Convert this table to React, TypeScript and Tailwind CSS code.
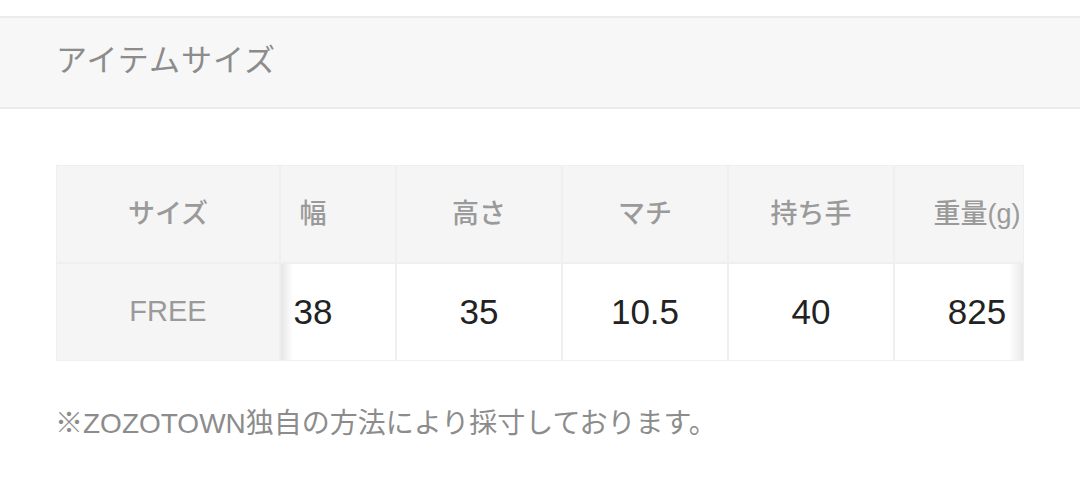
const FONT = { fontFamily: '"Liberation Sans", "Noto Sans CJK JP", sans-serif' };

const COLS = [
  { label: "幅", value: "38" },
  { label: "高さ", value: "35" },
  { label: "マチ", value: "10.5" },
  { label: "持ち手", value: "40" },
  { label: "重量(g)", value: "825" },
];

export default function App() {
  return (
    <div className="h-[484px] w-[1080px] overflow-hidden bg-white" style={FONT}>
      <div className="h-[16px]" />
      <div className="flex h-[93px] items-center border-y-2 border-[#ebebeb] bg-[#f7f7f7] pl-[56px] pb-[2px] text-[31px] tracking-[1px] text-[#8c8c8c]">
        アイテムサイズ
      </div>

      <div className="ml-[56px] mt-[56px] flex w-[968px] overflow-hidden border border-[#efefef] bg-[#efefef]">
        <div className="flex w-[222px] shrink-0 flex-col gap-[2px]">
          <div className="flex h-[96px] items-center justify-center bg-[#f5f5f5] text-[27px] font-medium text-[#9a9a9a]">
            サイズ
          </div>
          <div className="flex h-[96px] items-center justify-center bg-[#f5f5f5] text-[29px] font-medium text-[#9a9a9a]">
            FREE
          </div>
        </div>

        <div className="relative ml-[2px] flex-1 overflow-hidden">
          <div className="-ml-[50px] flex gap-[2px]">
            {COLS.map((c) => (
              <div key={c.label} className="flex w-[164px] shrink-0 flex-col gap-[2px]">
                <div className="flex h-[96px] items-center justify-center bg-[#f5f5f5] text-[27px] font-medium text-[#9a9a9a]">
                  {c.label}
                </div>
                <div className="flex h-[96px] items-center justify-center bg-white text-[35px] text-[#222]">
                  {c.value}
                </div>
              </div>
            ))}
          </div>
          <div className="pointer-events-none absolute bottom-0 left-0 h-[96px] w-[12px] bg-gradient-to-r from-[#e6e6e6] to-transparent" />
          <div className="pointer-events-none absolute bottom-0 right-0 h-[96px] w-[14px] bg-gradient-to-l from-[#eaeaea] to-transparent" />
        </div>
      </div>

      <div className="mt-[42px] pl-[55px] text-[28px] text-[#8c8c8c]">
        ※ZOZOTOWN独自の方法により採寸しております。
      </div>
    </div>
  );
}
